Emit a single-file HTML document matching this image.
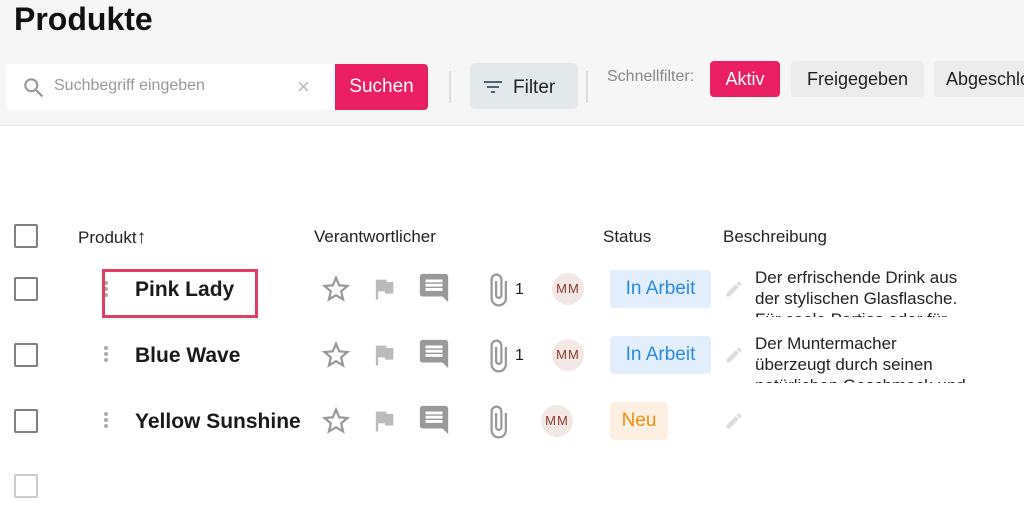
<!DOCTYPE html>
<html><head><meta charset="utf-8"><style>
*{margin:0;padding:0;box-sizing:border-box}
body{width:1024px;height:515px;overflow:hidden;background:#fff;font-family:"Liberation Sans",sans-serif;color:#222;position:relative}
.a{position:absolute}
.hdr{left:0;top:0;width:1024px;height:126px;background:#f6f6f6;border-bottom:1px solid #ececec}
.cb{width:24px;height:24px;border:2px solid #808080;border-radius:2px}
.name{font-weight:bold;font-size:21px;color:#1a1a1a}
.badge{border-radius:4px;font-size:19px;padding:0 11px;height:38px;line-height:38px}
.mm{width:32px;height:32px;border-radius:50%;background:#f2e8e6;color:#8a3a2a;font-size:13px;text-align:center;line-height:32px;letter-spacing:1px}
.desc{font-size:17px;line-height:21px;width:250px;height:50px;overflow:hidden;color:#222;white-space:nowrap}
.kebab{width:4px}
.kebab i{display:block;width:4px;height:4px;border-radius:50%;background:#aaa;margin-bottom:2px}
</style></head><body>
<div class="a hdr"></div>
<div class="a" style="left:14px;top:1px;font-size:32px;font-weight:bold;color:#111">Produkte</div>
<div class="a" style="left:6px;top:64px;width:329px;height:46px;background:#fff;border-radius:4px 0 0 4px"></div>
<svg class="a" style="left:21px;top:75px" width="26" height="26" viewBox="0 0 24 24"><path fill="#999" d="M15.5 14h-.79l-.28-.27A6.47 6.47 0 0016 9.5 6.5 6.5 0 109.5 16c1.61 0 3.09-.59 4.23-1.57l.27.28v.79l5 4.99L20.49 19l-4.99-5zm-6 0C7.01 14 5 11.99 5 9.5S7.01 5 9.5 5 14 7.01 14 9.5 11.99 14 9.5 14z"/></svg>
<div class="a" style="left:54px;top:77px;font-size:16px;color:#999">Suchbegriff eingeben</div>
<div class="a" style="left:297px;top:74px;font-size:22px;color:#bbb">×</div>
<div class="a" style="left:335px;top:64px;width:93px;height:46px;background:#e91e63;border-radius:0 4px 4px 0;color:#fff;font-size:19px;text-align:center;line-height:46px">Suchen</div>
<div class="a" style="left:449px;top:71px;width:2px;height:32px;background:#ddd"></div>
<div class="a" style="left:470px;top:63px;width:108px;height:46px;background:#e3e8ea;border-radius:5px"></div>
<svg class="a" style="left:481px;top:75px" width="24" height="24" viewBox="0 0 24 24"><path fill="#4a6670" d="M10 18h4v-2h-4v2zM3 6v2h18V6H3zm3 7h12v-2H6v2z"/></svg>
<div class="a" style="left:513px;top:77px;font-size:19px;color:#222">Filter</div>
<div class="a" style="left:586px;top:71px;width:2px;height:32px;background:#ddd"></div>
<div class="a" style="left:607px;top:68px;font-size:16px;color:#888">Schnellfilter:</div>
<div class="a" style="left:710px;top:61px;width:70px;height:36px;background:#e91e63;border-radius:4px;color:#fff;font-size:18px;text-align:center;line-height:36px">Aktiv</div>
<div class="a" style="left:791px;top:61px;width:133px;height:36px;background:#ececec;border-radius:4px;font-size:18px;text-align:center;line-height:36px">Freigegeben</div>
<div class="a" style="left:934px;top:61px;width:120px;height:36px;background:#ececec;border-radius:4px;font-size:18px;line-height:36px;padding-left:12px">Abgeschlossen</div>

<div class="a cb" style="left:14px;top:224px"></div>
<div class="a" style="left:78px;top:227px;font-size:17px">Produkt<span style="font-weight:bold;font-size:19px">↑</span></div>
<div class="a" style="left:314px;top:227px;font-size:17px">Verantwortlicher</div>
<div class="a" style="left:603px;top:227px;font-size:17px">Status</div>
<div class="a" style="left:723px;top:227px;font-size:17px">Beschreibung</div>

<div class="a cb" style="left:14px;top:277px"></div>
<div class="a kebab" style="left:104px;top:281px"><i></i><i></i><i></i></div>
<div class="a name" style="left:135px;top:278px">Pink Lady</div>
<div class="a" style="left:102px;top:269px;width:156px;height:49px;border:3px solid #e43d63"></div>

<div class="a cb" style="left:14px;top:343px"></div>
<div class="a kebab" style="left:104px;top:346px"><i></i><i></i><i></i></div>
<div class="a name" style="left:135px;top:344px">Blue Wave</div>

<div class="a cb" style="left:14px;top:409px"></div>
<div class="a kebab" style="left:104px;top:412px"><i></i><i></i><i></i></div>
<div class="a name" style="left:135px;top:410px">Yellow Sunshine</div>

<div class="a cb" style="left:14px;top:474px;border-color:#ccc"></div>

<svg width="0" height="0" style="position:absolute"><defs>
<symbol id="star" viewBox="0 0 24 24"><path fill="#999" d="M22 9.24l-7.19-.62L12 2 9.19 8.63 2 9.24l5.46 4.73L5.82 21 12 17.27 18.18 21l-1.63-7.03L22 9.24zM12 15.4l-3.76 2.27 1-4.28-3.32-2.88 4.38-.38L12 6.1l1.71 4.04 4.38.38-3.32 2.88 1 4.28L12 15.4z"/></symbol>
<symbol id="flag" viewBox="0 0 24 24"><path fill="#bbb" d="M14.4 6L14 4H5v17h2v-7h5.6l.4 2h7V6z"/></symbol>
<symbol id="cmt" viewBox="0 0 24 24"><path fill="#999" d="M21.99 4c0-1.1-.89-2-1.99-2H4c-1.1 0-2 .9-2 2v12c0 1.1.9 2 2 2h14l4 4-.01-18zM18 14H6v-2h12v2zm0-3H6V9h12v2zm0-3H6V6h12v2z"/></symbol>
<symbol id="clip" viewBox="0 0 24 24"><path fill="#999" d="M16.5 6v11.5c0 2.21-1.79 4-4 4s-4-1.79-4-4V5a2.5 2.5 0 015 0v10.5c0 .55-.45 1-1 1s-1-.45-1-1V6H10v9.5a2.5 2.5 0 005 0V5c0-2.21-1.79-4-4-4S7 2.79 7 5v12.5c0 3.04 2.46 5.5 5.5 5.5s5.5-2.46 5.5-5.5V6h-1.5z"/></symbol>
<symbol id="pen" viewBox="0 0 24 24"><path fill="#ddd" d="M3 17.25V21h3.75L17.81 9.94l-3.75-3.75L3 17.25zM20.71 7.04a1 1 0 000-1.41l-2.34-2.340a1 1 0 00-1.41 0l-1.83 1.83 3.75 3.75 1.83-1.83z"/></symbol>
</defs></svg>

<svg class="a" style="left:319px;top:272px" width="34" height="34"><use href="#star"/></svg>
<svg class="a" style="left:370px;top:275px" width="28" height="28"><use href="#flag"/></svg>
<svg class="a" style="left:417px;top:271px" width="34" height="34"><use href="#cmt"/></svg>
<svg class="a" style="left:480px;top:272px" width="36" height="36"><use href="#clip"/></svg>
<div class="a" style="left:515px;top:281px;font-size:16px">1</div>
<div class="a mm" style="left:552px;top:273px">MM</div>
<div class="a badge" style="left:610px;top:270px;width:101px;text-align:center;padding:0;background:#e2eefc;color:#2a8ae0">In Arbeit</div>
<svg class="a" style="left:724px;top:279px" width="20" height="20"><use href="#pen"/></svg>
<div class="a desc" style="left:755px;top:267px">Der erfrischende Drink aus<br>der stylischen Glasflasche.<br>Für coole Parties oder für</div>

<svg class="a" style="left:319px;top:338px" width="34" height="34"><use href="#star"/></svg>
<svg class="a" style="left:370px;top:341px" width="28" height="28"><use href="#flag"/></svg>
<svg class="a" style="left:417px;top:337px" width="34" height="34"><use href="#cmt"/></svg>
<svg class="a" style="left:480px;top:338px" width="36" height="36"><use href="#clip"/></svg>
<div class="a" style="left:515px;top:347px;font-size:16px">1</div>
<div class="a mm" style="left:552px;top:339px">MM</div>
<div class="a badge" style="left:610px;top:336px;width:101px;text-align:center;padding:0;background:#e2eefc;color:#2a8ae0">In Arbeit</div>
<svg class="a" style="left:724px;top:345px" width="20" height="20"><use href="#pen"/></svg>
<div class="a desc" style="left:755px;top:333px">Der Muntermacher<br>überzeugt durch seinen<br>natürlichen Geschmack und</div>

<svg class="a" style="left:319px;top:404px" width="34" height="34"><use href="#star"/></svg>
<svg class="a" style="left:370px;top:407px" width="28" height="28"><use href="#flag"/></svg>
<svg class="a" style="left:417px;top:403px" width="34" height="34"><use href="#cmt"/></svg>
<svg class="a" style="left:480px;top:404px" width="36" height="36"><use href="#clip"/></svg>
<div class="a mm" style="left:541px;top:405px">MM</div>
<div class="a badge" style="left:610px;top:402px;width:58px;text-align:center;padding:0;background:#fdf0e2;color:#f08c10">Neu</div>
<svg class="a" style="left:724px;top:411px" width="20" height="20"><use href="#pen"/></svg>
</body></html>
